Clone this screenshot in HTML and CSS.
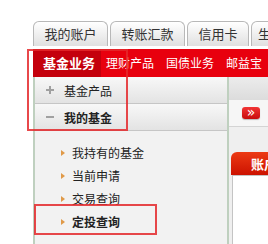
FILE: index.html
```html
<!DOCTYPE html>
<html lang="zh-CN">
<head>
<meta charset="utf-8">
<link rel="stylesheet" href="styles.css">
</head>
<body>
<div class="page">
  <div class="tabs">
    <div class="tab w75">我的账户</div>
    <div class="tab w75">转账汇款</div>
    <div class="tab w62">信用卡</div>
    <div class="tab w60">生活缴费</div>
  </div>
  <div class="nav">
    <span class="nav-item active">基金业务</span>
    <span class="nav-item">理财产品</span>
    <span class="nav-item">国债业务</span>
    <span class="nav-item">邮益宝</span>
  </div>
  <div class="main">
    <div class="sidebar">
      <div class="row"><span class="ico plus"></span>基金产品</div>
      <div class="row bold"><span class="ico minus"></span>我的基金</div>
      <ul class="sub">
        <li><span class="arrow"></span>我持有的基金</li>
        <li><span class="arrow"></span>当前申请</li>
        <li><span class="arrow"></span>交易查询</li>
        <li class="bold"><span class="arrow"></span>定投查询</li>
      </ul>
    </div>
    <div class="content">
      <div class="band1"></div>
      <div class="band2"><span class="btn">&#187;</span></div>
      <div class="band3"></div>
      <div class="ctab">账户查询</div>
      <div class="cbox"></div>
    </div>
  </div>
  <div class="mark mark1"></div>
  <div class="mark mark2"></div>
</div>
</body>
</html>
```
FILE: styles.css
```css
html, body {
  margin: 0;
  padding: 0;
  background: #fff;
}
.page {
  position: relative;
  width: 268px;
  height: 244px;
  overflow: hidden;
  font-family: "Noto Sans CJK SC", "Noto Sans", sans-serif;
}
.tabs {
  display: flex;
  gap: 2px;
  padding: 21px 0 0 33px;
  white-space: nowrap;
}
.tab {
  flex: none;
  box-sizing: border-box;
  height: 25px;
  border: 1px solid #b8b8b8;
  border-bottom: none;
  border-radius: 6px 6px 0 0;
  background: linear-gradient(#ffffff, #e0e0e0);
  color: #333;
  font-size: 13px;
  line-height: 24px;
  text-align: center;
  overflow: hidden;
}
.w75 { width: 75px; }
.w62 { width: 62px; }
.w60 { width: 60px; padding-left: 6px; text-align: left; }
.nav {
  display: flex;
  align-items: center;
  height: 28px;
  margin: 3px 0 0 33px;
  background: #e8000e;
  color: #fff;
  font-size: 12px;
  white-space: nowrap;
  overflow: hidden;
}
.nav-item {
  margin-right: 12px;
  line-height: 28px;
}
.nav-item.active {
  background: #c4000c;
  font-weight: bold;
  font-size: 13px;
  padding: 0 6px 0 10px;
  margin-right: 5px;
}
.main {
  display: flex;
  margin-left: 33px;
  height: 167px;
}
.sidebar {
  width: 192px;
  flex: none;
  border-left: 2px solid #bfd0bf;
  border-right: 2px solid #bfd0bf;
  background: #f2f2f2;
  font-size: 12px;
  color: #222;
}
.row {
  display: flex;
  align-items: center;
  height: 26px;
  padding-left: 11px;
  border-bottom: 1px solid #c6c6c6;
  background: linear-gradient(#f8f8f8, #e3e3e3);
}
.bold { font-weight: bold; }
.ico {
  position: relative;
  width: 8px;
  height: 8px;
  margin-right: 10px;
}
.ico::before,
.plus::after {
  content: "";
  position: absolute;
  background: #a0a0a0;
}
.ico::before {
  left: 0;
  top: 3px;
  width: 8px;
  height: 2px;
}
.plus::after {
  left: 3px;
  top: 0;
  width: 2px;
  height: 8px;
}
.sub {
  list-style: none;
  margin: 0;
  padding: 10px 0 0 26px;
}
.sub li {
  display: flex;
  align-items: center;
  height: 23px;
  line-height: 23px;
}
.arrow {
  width: 0;
  height: 0;
  border-top: 3px solid transparent;
  border-bottom: 3px solid transparent;
  border-left: 4px solid #e09a48;
  margin-right: 7px;
}
.content {
  flex: 1;
  background: #efefef;
}
.band1 {
  height: 23px;
  background: linear-gradient(#ececec, #dcdcdc);
}
.band2 {
  height: 26px;
  border-bottom: 1px solid #d4d4d4;
  background: #f6f6f6;
  display: flex;
  align-items: center;
  padding-left: 13px;
}
.btn {
  width: 18px;
  height: 12px;
  border-radius: 3px;
  background: linear-gradient(#f23434, #c80c0c);
  box-shadow: 0 1px 1px rgba(0, 0, 0, 0.25);
  color: #fff;
  font-size: 14px;
  line-height: 11px;
  text-align: center;
  font-family: "DejaVu Sans", sans-serif;
}
.band3 {
  height: 25px;
}
.ctab {
  margin-left: 2px;
  height: 23px;
  border-radius: 6px 0 0 0;
  background: linear-gradient(#ec3a14, #cc1200);
  color: #fff;
  font-size: 13px;
  font-weight: bold;
  line-height: 23px;
  padding-left: 20px;
  white-space: nowrap;
  overflow: hidden;
}
.cbox {
  margin-left: 3px;
  height: 80px;
  border: 1px solid #c4c4c4;
  background: #fff;
}
.mark {
  position: absolute;
  box-sizing: border-box;
  border: 2px solid rgba(228, 40, 44, 0.85);
}
.mark1 {
  left: 27px;
  top: 49px;
  width: 101px;
  height: 82px;
}
.mark2 {
  left: 34px;
  top: 204px;
  width: 123px;
  height: 31px;
}
```
